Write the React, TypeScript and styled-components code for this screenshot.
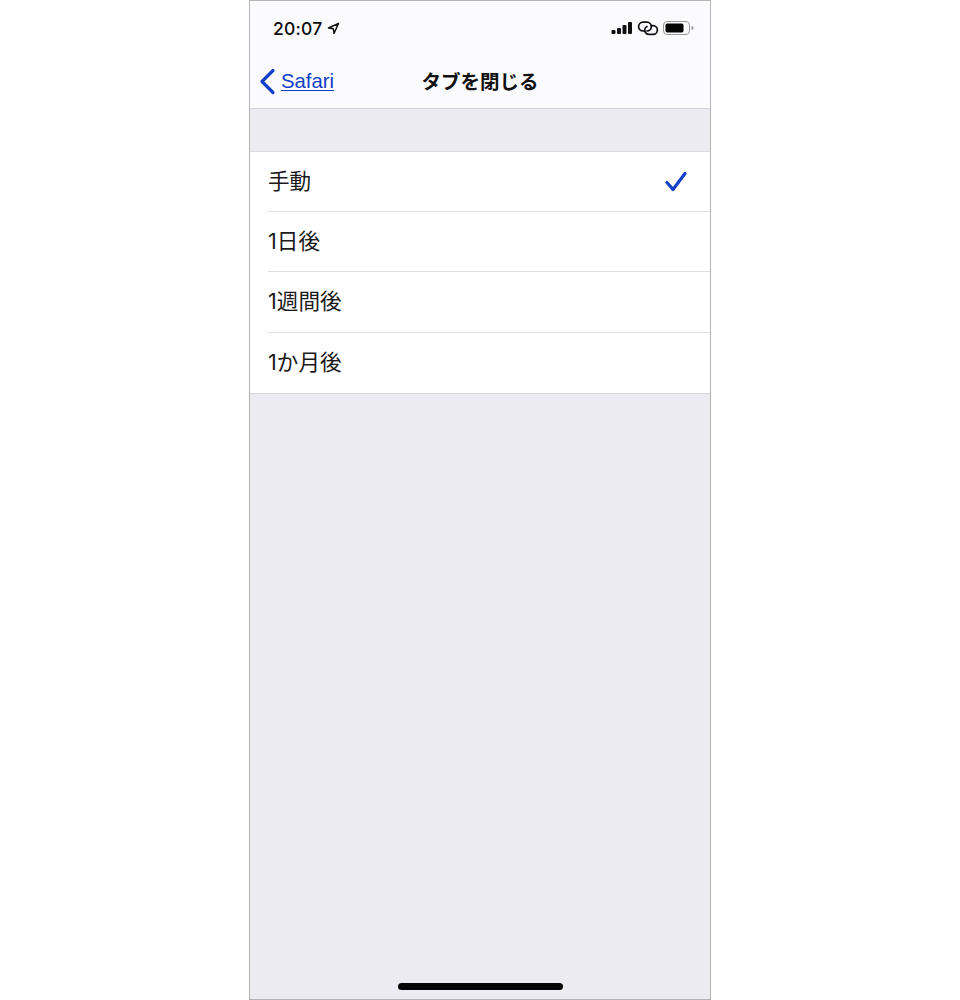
import React from 'react';
import styled, { createGlobalStyle } from 'styled-components';

const GlobalStyle = createGlobalStyle`
  html, body {
    margin: 0;
    padding: 0;
    background: #fff;
  }
`;

const Page = styled.div`
  display: flex;
  justify-content: center;
  width: 960px;
  height: 1000px;
`;

const Phone = styled.div`
  display: flex;
  flex-direction: column;
  box-sizing: border-box;
  width: 462px;
  height: 1000px;
  border: 1px solid #b4b4b6;
  background: #ebebf1;
  font-family: 'Inter', 'Noto Sans CJK JP', sans-serif;
  color: #111;
`;

const Header = styled.div`
  background: #fbfbfd;
  border-bottom: 1px solid #d4d4d8;
  height: 108px;
  box-sizing: border-box;
`;

const StatusBar = styled.div`
  display: flex;
  align-items: center;
  justify-content: space-between;
  height: 54px;
  padding: 0 16px 0 23px;
`;

const Clock = styled.div`
  display: flex;
  align-items: center;
  gap: 5px;
  font-size: 17.5px;
  font-weight: 500;
  letter-spacing: 0.2px;
  color: #0c0c0c;
`;

const StatusIcons = styled.div`
  display: flex;
  align-items: center;
  gap: 4px;
`;

const NavBar = styled.div`
  display: grid;
  grid-template-columns: 1fr auto 1fr;
  align-items: center;
  height: 54px;
  padding: 0 9px 2px;
  box-sizing: border-box;
`;

const BackLink = styled.a`
  display: flex;
  align-items: center;
  gap: 5px;
  color: #1340c8;
  font-family: 'Liberation Sans', 'Inter', sans-serif;
  font-size: 20.3px;
  text-decoration: underline;
  text-underline-offset: 2px;
  text-decoration-thickness: 1px;
`;

const Title = styled.div`
  padding-bottom: 2px;
  font-family: 'Noto Sans CJK JP', sans-serif;
  font-size: 19.5px;
  font-weight: 700;
  color: #111;
`;

const Spacer = styled.div`
  height: 42px;
`;

const List = styled.div`
  background: #fff;
  border-top: 1px solid #dcdce0;
  border-bottom: 1px solid #d8d8dc;
  box-sizing: border-box;
`;

const Row = styled.div<{ $last?: boolean }>`
  display: flex;
  align-items: center;
  justify-content: space-between;
  box-sizing: border-box;
  height: ${(p) => (p.$last ? '60px' : '60.2px')};
  margin-left: 18px;
  padding-right: 22px;
  border-bottom: ${(p) => (p.$last ? 'none' : '1px solid #dedee0')};
`;

const Label = styled.span`
  font-size: 21.6px;
  line-height: 1;
  color: #1a1a1a;
`;

const Fill = styled.div`
  flex: 1;
  display: flex;
  align-items: flex-end;
  justify-content: center;
  padding: 0 0 9px 0;
`;

const HomeBar = styled.div`
  width: 165px;
  height: 7px;
  border-radius: 4px;
  background: #050505;
`;

const rows = ['手動', '1日後', '1週間後', '1か月後'];

const App = () => {
  return (
    <Page>
      <GlobalStyle />
      <Phone>
        <Header>
          <StatusBar>
            <Clock>
              20:07
              <svg width="13" height="13" viewBox="0 0 13 13" fill="none" stroke="#111" strokeWidth="1.5" strokeLinejoin="round">
                <path d="M11.5 1.5 L1.5 6 L6.3 6.7 L7 11.5 Z" />
              </svg>
            </Clock>
            <StatusIcons>
              <svg width="22" height="12" viewBox="0 0 22 12">
                <rect x="0.5" y="8" width="4" height="4" rx="1" fill="#111" />
                <rect x="6" y="6" width="4" height="6" rx="1" fill="#111" />
                <rect x="11.5" y="3" width="4" height="9" rx="1" fill="#111" />
                <rect x="17" y="0" width="4" height="12" rx="1" fill="#111" />
              </svg>
              <svg width="22" height="15" viewBox="0 0 22 15" fill="none" stroke="#111" strokeWidth="1.7" strokeLinecap="round">
                <path d="M8 10 H6 a4.4 4.4 0 0 1 0 -8.8 H10 a4.4 4.4 0 0 1 4.4 4.4 a4.4 4.4 0 0 1 -4.4 4.4" />
                <path d="M14 4.6 H16 a4.4 4.4 0 0 1 0 8.8 H12 a4.4 4.4 0 0 1 -4.4 -4.4 a4.4 4.4 0 0 1 2.4 -3.4" />
              </svg>
              <svg width="31" height="14" viewBox="0 0 31 14">
                <rect x="0.5" y="0.5" width="26" height="13" rx="3.5" fill="none" stroke="#9a9a9a" />
                <rect x="2.5" y="2.5" width="18" height="9" rx="1.8" fill="#050505" />
                <path d="M28.5 5 a2 2 0 0 1 0 4 Z" fill="#9a9a9a" />
              </svg>
            </StatusIcons>
          </StatusBar>
          <NavBar>
            <BackLink>
              <svg width="17" height="27" viewBox="0 0 17 27" fill="none" stroke="#1340c8" strokeWidth="3.2" strokeLinecap="round" strokeLinejoin="round">
                <path d="M14 2.5 L3 13.5 L14 24.5" />
              </svg>
              Safari
            </BackLink>
            <Title>タブを閉じる</Title>
          </NavBar>
        </Header>
        <Spacer />
        <List>
          {rows.map((label, i) => (
            <Row key={label} $last={i === rows.length - 1}>
              <Label>{label}</Label>
              {i === 0 && (
                <svg width="24" height="21" viewBox="0 0 24 21" fill="none" stroke="#1340c8" strokeWidth="3.2" strokeLinecap="round" strokeLinejoin="round">
                  <path d="M3 11.5 L9 18.5 L21 2.5" />
                </svg>
              )}
            </Row>
          ))}
        </List>
        <Fill>
          <HomeBar />
        </Fill>
      </Phone>
    </Page>
  );
};

export default App;
